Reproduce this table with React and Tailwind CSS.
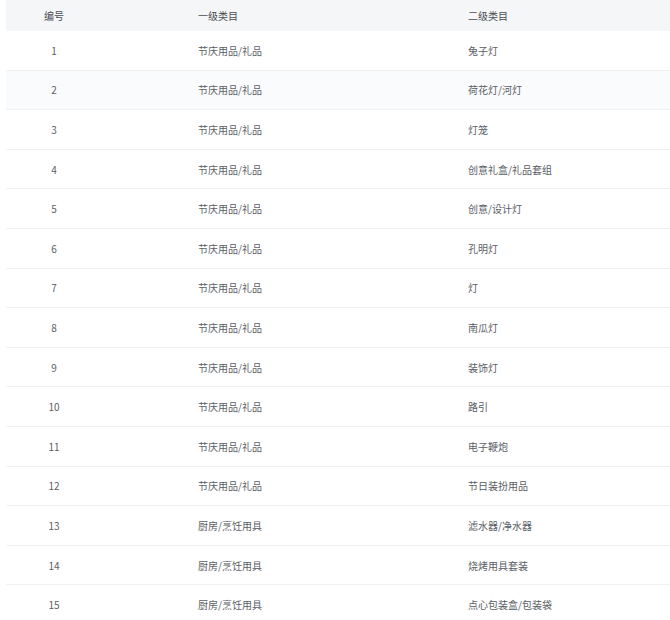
import React from "react";

const ROWS = [
  ["节庆用品/礼品", "兔子灯"],
  ["节庆用品/礼品", "荷花灯/河灯"],
  ["节庆用品/礼品", "灯笼"],
  ["节庆用品/礼品", "创意礼盒/礼品套组"],
  ["节庆用品/礼品", "创意/设计灯"],
  ["节庆用品/礼品", "孔明灯"],
  ["节庆用品/礼品", "灯"],
  ["节庆用品/礼品", "南瓜灯"],
  ["节庆用品/礼品", "装饰灯"],
  ["节庆用品/礼品", "路引"],
  ["节庆用品/礼品", "电子鞭炮"],
  ["节庆用品/礼品", "节日装扮用品"],
  ["厨房/烹饪用具", "滤水器/净水器"],
  ["厨房/烹饪用具", "烧烤用具套装"],
  ["厨房/烹饪用具", "点心包装盒/包装袋"],
];

export default function App() {
  return (
    <div
      className="w-[670px] h-[620px] overflow-hidden bg-white pl-[6px] text-[10px] text-[#5a5e66]"
      style={{ fontFamily: '"Noto Sans CJK SC", "Noto Sans", sans-serif' }}
    >
      {/* 表头 */}
      <div className="grid grid-cols-[96px_354px_1fr] h-[31px] items-center bg-[#f5f6f8] text-[#4a4d52]">
        <div className="text-center">编号</div>
        <div className="pl-[96px]">一级类目</div>
        <div className="pl-[12px]">二级类目</div>
      </div>

      {ROWS.map(([a, b], i) => (
        <div
          key={i}
          className={`grid grid-cols-[96px_354px_1fr] h-[39.6px] items-center border-b border-[#eef0f3] ${
            i === 1 ? "bg-[#fafbfc]" : "bg-white"
          }`}
        >
          <div className="text-center">{i + 1}</div>
          <div className="pl-[96px]">{a}</div>
          <div className="pl-[12px]">{b}</div>
        </div>
      ))}
    </div>
  );
}
